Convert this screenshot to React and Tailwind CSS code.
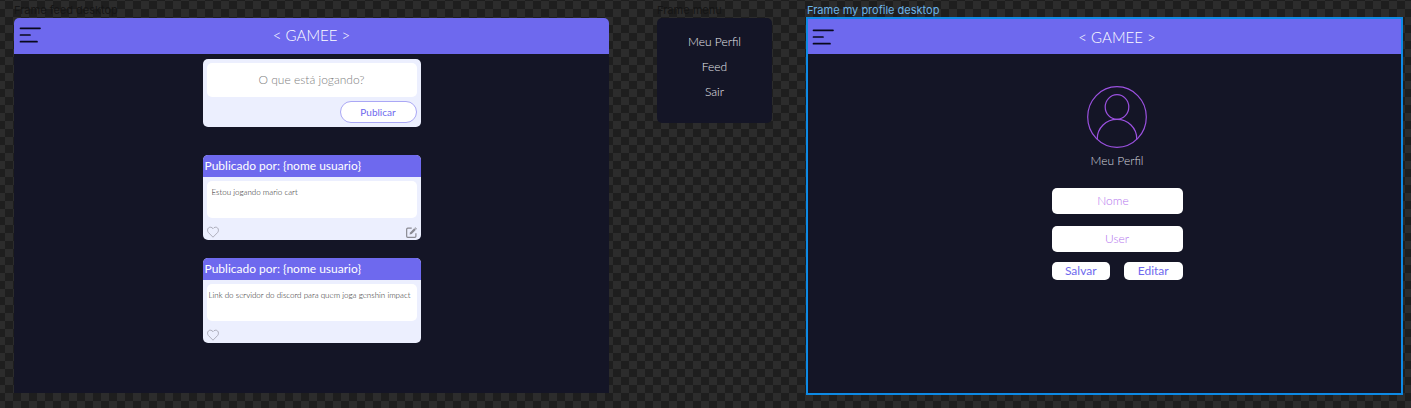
import React from "react";

const MenuIcon = () => (
  <svg width="22" height="16" viewBox="0 0 22 16" fill="none" stroke="#08081c" strokeWidth="1.7" strokeLinecap="round">
    <path d="M1.500 1.300h19.500M1.500 8h9.500M1.500 14.700h16.500" />
  </svg>
);

const HeartIcon = () => (
  <svg width="12" height="12" viewBox="0 0 12 12" fill="none" stroke="#a0a0ac" strokeWidth="0.8" strokeLinejoin="round">
    <path d="M6 11.200 1.400 6.500C.3 5.300.2 3 1.500 1.900 2.900.7 4.800 1 6 2.700 7.200 1 9.100.7 10.500 1.900c1.300 1.100 1.200 3.400.1 4.600Z" />
  </svg>
);

const EditIcon = () => (
  <svg width="11" height="11" viewBox="0 0 10 10" fill="none" stroke="#8a8a92">
    <path d="M5.200 1H1.600Q.6 1 .6 2v6.400q0 1 1 1H8q1 0 1-1V5.600" strokeWidth="1.100" />
    <path d="m3.200 6.900.5-2L7.500 1.100 9 2.600 5.200 6.400Z" fill="#8a8a92" stroke="none" />
    <path d="M7.900.7 8.400.2 9.900 1.700l-.5.5Z" fill="#8a8a92" stroke="none" />
  </svg>
);

const AvatarIcon = () => (
  <svg width="60" height="62" viewBox="0 0 60 62" fill="none" stroke="#9b51e0" strokeWidth="1.200">
    <ellipse cx="30" cy="31" rx="29.300" ry="30.300" />
    <ellipse cx="30" cy="21" rx="11.800" ry="12.300" />
    <path d="M10.300 53.500V52.500C10.300 42 19 33.300 30 33.300S49.700 42 49.700 52.500v1" />
  </svg>
);

function Post({ text, editable, inset }) {
  return (
    <article className="overflow-hidden rounded-[5px] bg-[#eceffe]">
      <h2 className="h-[22px] bg-[#6e69ee] px-0.5 text-xs leading-[22px] font-normal text-white">
        Publicado por: {"{nome usuario}"}
      </h2>
      <div className="px-1 pt-1 pb-0.5">
        <p className={`h-[37px] rounded-[5px] bg-white pt-[5px] text-[8px] leading-3 font-light whitespace-nowrap text-[#222] ${inset}`}>{text}</p>
        <div className="mt-2 flex h-3 items-center justify-between">
          <button type="button" aria-label="Curtir"><HeartIcon /></button>
          {editable && <button type="button" aria-label="Editar publicação"><EditIcon /></button>}
        </div>
      </div>
    </article>
  );
}

const labelStyle = "pt-1 font-['Inter',sans-serif] text-[11px] leading-3";
const titleStyle = "text-[15px] leading-5 font-light text-white";
const fieldStyle = "block h-[26px] w-full rounded-[5px] bg-white pb-0.5 text-center text-xs font-light text-[#9b51e0] outline-none placeholder:text-[#b473ee]";
const actionStyle = "h-[18px] rounded-[5px] bg-white text-xs leading-4 text-[#6e69ee]";

export default function App() {
  return (
    <main className="flex min-h-screen items-start bg-[repeating-conic-gradient(#2c2c2c_0%_25%,#1e1e1e_0%_50%)] bg-size-[16px_16px] bg-position-[5px_1px] pr-2 pb-3 pl-3.5 font-['Lato',sans-serif]">
      <section className="min-w-0 flex-[595]">
        <div className={`${labelStyle} h-[18px] text-[#151515]`}>Frame feed desktop</div>
        <div className="overflow-hidden rounded-t-[5px] bg-[#141526] pb-[50px]">
          <header className="grid h-9 grid-cols-[1fr_auto_1fr] items-center bg-[#6e69ee] pb-0.5">
            <button type="button" aria-label="Abrir menu" className="ml-[5px] justify-self-start">
              <MenuIcon />
            </button>
            <h1 className={titleStyle}>&lt; GAMEE &gt;</h1>
          </header>
          <div className="mx-auto mt-[5px] w-[218px]">
            <form className="rounded-[5px] bg-[#eceffe] p-1" onSubmit={(e) => e.preventDefault()}>
              <input aria-label="O que está jogando?" placeholder="O que está jogando?" className="block h-[34px] w-full rounded-[5px] bg-white pb-0.5 text-center text-xs font-light outline-none placeholder:text-[#808080]" />
              <button className="mt-1 ml-auto block h-[22px] w-[77px] rounded-full border border-[#aaa7f5] bg-white text-[10px] font-normal text-[#6e69ee]">Publicar</button>
            </form>
            <div className="mt-7 flex flex-col gap-[18px]">
              <Post text="Estou jogando mario cart" inset="pl-[5px]" editable />
              <Post text="Link do servidor do discord para quem joga genshin impact" inset="pl-0.5" />
            </div>
          </div>
        </div>
      </section>

      <section className="ml-12 w-[115px]">
        <div className={`${labelStyle} h-[18px] text-[#151515]`}>Frame menu</div>
        <nav className="flex flex-col items-center rounded-[5px] bg-[#141526] pt-[11px] pb-[19px] text-xs leading-[25px] font-light text-[#e8e8ee]">
          <a href="#perfil">Meu Perfil</a>
          <a href="#feed">Feed</a>
          <a href="#sair">Sair</a>
        </nav>
      </section>

      <section className="ml-[34px] min-w-0 flex-[597]">
        <div className={`${labelStyle} h-[17px] pl-px text-[#6cb4e8]`}>Frame my profile desktop</div>
        <div className="border-2 border-[#0d8ae5] bg-[#141526] pb-[113px]">
          <header className="grid h-[35px] grid-cols-[25px_1fr_auto_1fr] items-center bg-[#6e69ee]">
            <button type="button" aria-label="Abrir menu" className="ml-1 w-[22px]">
              <MenuIcon />
            </button>
            <span />
            <h1 className={titleStyle}>&lt; GAMEE &gt;</h1>
          </header>
          <div className="flex flex-col items-center pt-8 pl-[25px]">
            <AvatarIcon />
            <h2 className="mt-[5px] text-xs leading-4 font-light text-[#d5d5df]">Meu Perfil</h2>
            <form className="mt-[19px] w-[131px]" onSubmit={(e) => e.preventDefault()}>
              <input aria-label="Nome" placeholder="Nome" className={`${fieldStyle} pr-2`} />
              <input aria-label="User" placeholder="User" className={`${fieldStyle} mt-3`} />
              <div className="mt-2.5 grid grid-cols-2 gap-3.5">
                <button className={actionStyle}>Salvar</button>
                <button type="button" className={actionStyle}>Editar</button>
              </div>
            </form>
          </div>
        </div>
      </section>
    </main>
  );
}
